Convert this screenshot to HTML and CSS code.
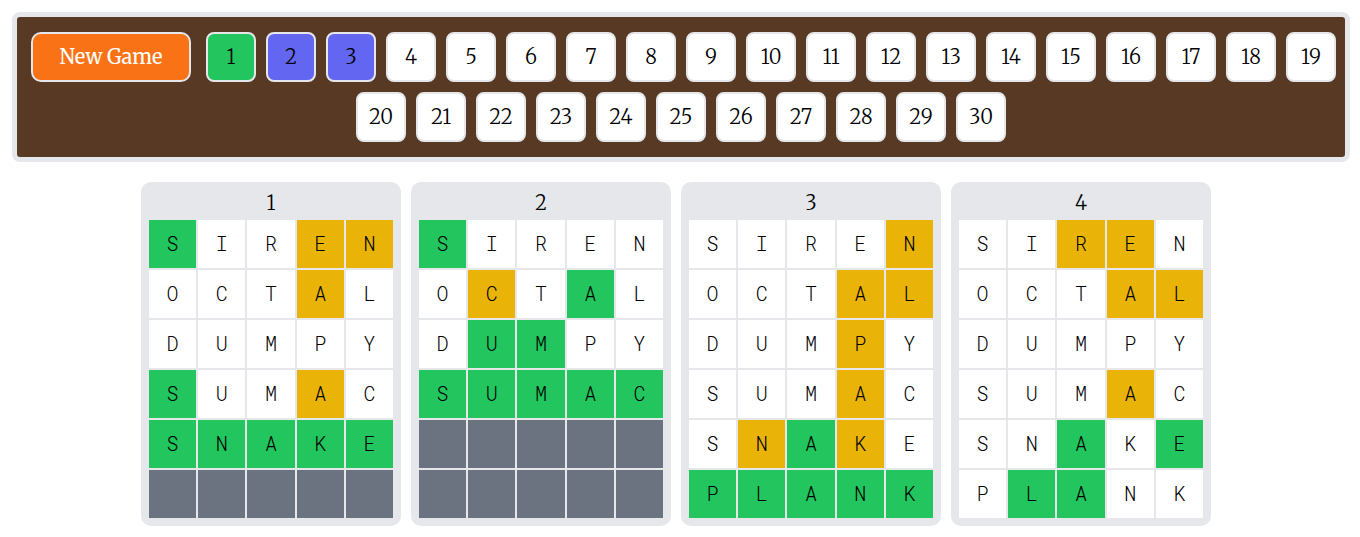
FILE: index.html
```html
<!DOCTYPE html>
<html lang="en">
<head>
<meta charset="utf-8">
<meta name="viewport" content="width=device-width, initial-scale=1">
<title>Word Game</title>
<link rel="stylesheet" href="styles.css">
</head>
<body>
<nav class="toolbar" id="toolbar" aria-label="Boards">
  <button type="button" class="new-game">New Game</button>
</nav>
<main class="boards" id="boards"></main>
<script src="game.js"></script>
</body>
</html>
```
FILE: styles.css
```css
*, *::before, *::after { box-sizing: border-box; }

body {
  margin: 12px 10px 0 12px;
  background: #fff;
  color: #000;
  font-family: Merriweather, "Liberation Serif", serif;
  font-size: 20px;
  font-weight: 300;
  line-height: 30px;
}

.toolbar {
  display: flex;
  flex-wrap: wrap;
  justify-content: center;
  padding: 10px 0;
  border: 5px solid #e5e7eb;
  border-radius: 8px;
  background: #583923;
}

.new-game,
.jump {
  height: 50px;
  margin: 5px;
  padding: 0;
  border: 2px solid #e5e7eb;
  border-radius: 8px;
  font: inherit;
  cursor: pointer;
}

.new-game {
  width: 160px;
  margin: 5px 10px;
  border-radius: 10px;
  background: #f97316;
  color: #fff;
  font-weight: 400;
}

.jump {
  width: 50px;
  background: #fff;
  color: #000;
}

.jump.solved { background: #22c55e; }
.jump.seen { background: #6366f1; }

.boards {
  display: flex;
  flex-wrap: wrap;
  justify-content: center;
  margin-top: 20px;
}

.board {
  width: 260px;
  margin: 0 10px 10px 0;
  padding: 6px 8px 8px;
  border-radius: 10px;
  background: #e5e7eb;
}

.board-title {
  margin: 0;
  padding-bottom: 2px;
  font-size: 20px;
  font-weight: 300;
  text-align: center;
}

.tiles {
  display: grid;
  grid-template-columns: repeat(5, 1fr);
  grid-auto-rows: 48px;
  gap: 2px;
  font-family: "Roboto Mono", "DejaVu Sans Mono", monospace;
  font-size: 20px;
  font-weight: 300;
  line-height: 28px;
}

.tile {
  display: flex;
  align-items: center;
  justify-content: center;
  padding-bottom: 2px;
  background: #fff;
}

.tile.hit { background: #22c55e; }
.tile.near { background: #eab308; }
.tile.unused { background: #6b7280; }
```
FILE: game.js
```js
// Marks per letter: g = right place, y = wrong place, - = absent.
const guesses = ["SIREN", "OCTAL", "DUMPY", "SUMAC", "SNAKE", "PLANK"];
const boards = [
  ["g--yy", "---y-", "-----", "g--y-", "ggggg"],
  ["g----", "-y-g-", "-gg--", "ggggg"],
  ["----y", "---yy", "---y-", "---y-", "-ygy-", "ggggg"],
  ["--yy-", "---yy", "-----", "---y-", "--g-g", "-gg--"]
];
const buttonStates = { 1: "solved", 2: "seen", 3: "seen" };
const markClasses = { g: "hit", y: "near" };

function make(tag, className, text) {
  const node = document.createElement(tag);
  node.className = className;
  node.textContent = text;
  return node;
}

const toolbar = document.getElementById("toolbar");
for (let n = 1; n <= 30; n++) {
  const button = make("button", ("jump " + (buttonStates[n] || "")).trim(), n);
  button.type = "button";
  toolbar.append(button);
}

const area = document.getElementById("boards");
boards.forEach((rows, index) => {
  const board = make("section", "board", "");
  const tiles = make("div", "tiles", "");
  guesses.forEach((word, row) => {
    [...word].forEach((letter, col) => {
      const marks = rows[row];
      const state = marks ? markClasses[marks[col]] || "" : "unused";
      tiles.append(make("div", ("tile " + state).trim(), marks ? letter : ""));
    });
  });
  board.append(make("h2", "board-title", index + 1), tiles);
  area.append(board);
});
```
